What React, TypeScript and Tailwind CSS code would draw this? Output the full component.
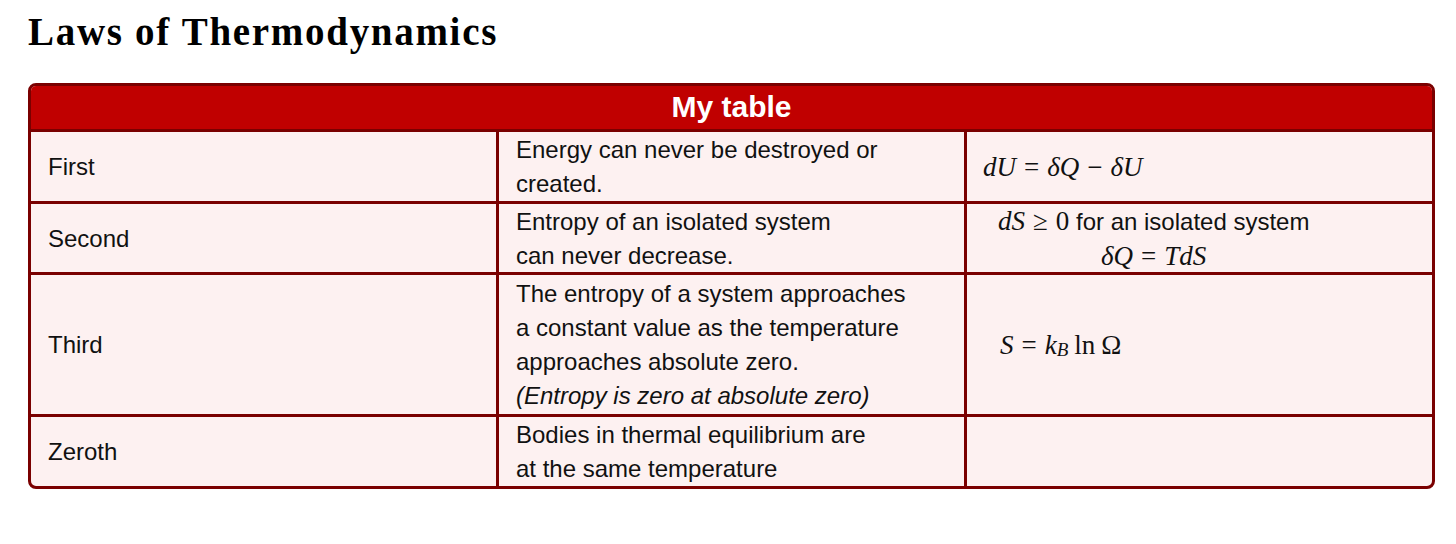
import React from "react";

const sans = "font-['Liberation_Sans',Arial,sans-serif]";
const serif = "font-['Liberation_Serif','Times_New_Roman',serif]";

function M({ children }: { children: React.ReactNode }) {
  return <span className={`${serif} italic`}>{children}</span>;
}
function Op({ children }: { children: React.ReactNode }) {
  return <span className={`${serif} not-italic inline-block mx-[8px]`}>{children}</span>;
}

export default function App() {
  return (
    <div className="w-[1456px] h-[544px] bg-white pt-[10px] pl-[28px] text-[#111]">
      <h1 className={`${serif} font-bold text-[39px] leading-[44px] tracking-[1.7px] text-black`}>
        Laws of Thermodynamics
      </h1>
      <div className="mt-[29px] w-[1407px] rounded-[8px] border-[3px] border-[#7a0000] overflow-hidden bg-[#fdf1f1]">
        <div className={`${sans} h-[43px] bg-[#c00000] flex items-center justify-center text-white font-bold text-[30px] leading-none pb-[2px]`}>
          My table
        </div>

        {/* Row 1 */}
        <div className={`${sans} grid grid-cols-[465px_468px_468px] border-t-[3px] border-[#7a0000] h-[72px] text-[24px] leading-[34px]`}>
          <div className="flex items-center pl-[17px]">First</div>
          <div className="flex items-center pl-[17px] border-l-[3px] border-[#7a0000]">
            <div>
              Energy can never be destroyed or
              <br />
              created.
            </div>
          </div>
          <div className="flex items-center pl-[16px] border-l-[3px] border-[#7a0000] text-[27px]">
            <span>
              <M>dU</M>
              <Op>=</Op>
              <M>δQ</M>
              <Op>−</Op>
              <M>δU</M>
            </span>
          </div>
        </div>

        {/* Row 2 */}
        <div className={`${sans} grid grid-cols-[465px_468px_468px] border-t-[3px] border-[#7a0000] h-[71px] text-[24px] leading-[34px]`}>
          <div className="flex items-center pl-[17px]">Second</div>
          <div className="flex items-center pl-[17px] border-l-[3px] border-[#7a0000]">
            <div>
              Entropy of an isolated system
              <br />
              can never decrease.
            </div>
          </div>
          <div className="flex items-center pl-[31px] border-l-[3px] border-[#7a0000]">
            <div className="text-center">
              <div>
                <span className="text-[27px]">
                  <M>dS</M>
                  <Op>≥</Op>
                  <span className={`${serif}`}>0</span>
                </span>{" "}
                for an isolated system
              </div>
              <div className="text-[27px]">
                <M>δQ</M>
                <Op>=</Op>
                <M>TdS</M>
              </div>
            </div>
          </div>
        </div>

        {/* Row 3 */}
        <div className={`${sans} grid grid-cols-[465px_468px_468px] border-t-[3px] border-[#7a0000] h-[142px] text-[24px] leading-[34px]`}>
          <div className="flex items-center pl-[17px]">Third</div>
          <div className="flex items-center pl-[17px] border-l-[3px] border-[#7a0000]">
            <div>
              The entropy of a system approaches
              <br />
              a constant value as the temperature
              <br />
              approaches absolute zero.
              <br />
              <span className="italic">(Entropy is zero at absolute zero)</span>
            </div>
          </div>
          <div className="flex items-center pl-[33px] border-l-[3px] border-[#7a0000] text-[27px]">
            <span>
              <M>S</M>
              <Op>=</Op>
              <M>k</M>
              <sub className={`${serif} italic text-[19px] relative top-[2px]`}>B</sub>
              <span className={`${serif} ml-[6px]`}>ln</span>
              <span className={`${serif} ml-[6px]`}>Ω</span>
            </span>
          </div>
        </div>

        {/* Row 4 */}
        <div className={`${sans} grid grid-cols-[465px_468px_468px] border-t-[3px] border-[#7a0000] h-[72px] text-[24px] leading-[34px]`}>
          <div className="flex items-center pl-[17px]">Zeroth</div>
          <div className="flex items-center pl-[17px] border-l-[3px] border-[#7a0000]">
            <div>
              Bodies in thermal equilibrium are
              <br />
              at the same temperature
            </div>
          </div>
          <div className="border-l-[3px] border-[#7a0000]"></div>
        </div>
      </div>
    </div>
  );
}
